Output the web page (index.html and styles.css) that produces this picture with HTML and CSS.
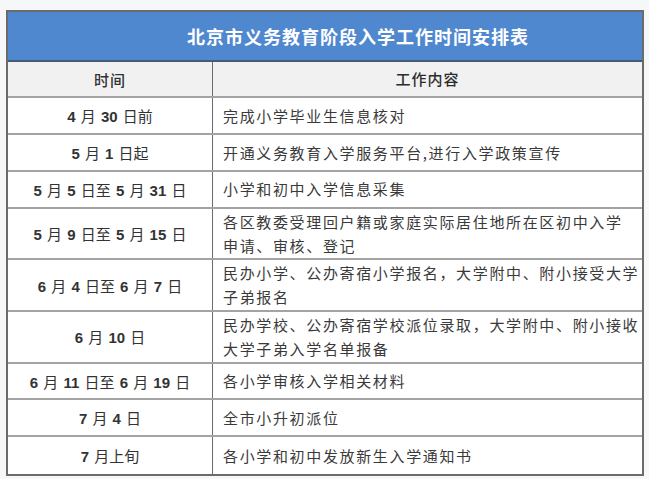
FILE: index.html
```html
<!DOCTYPE html>
<html lang="zh-CN">
<head>
<meta charset="utf-8">
<title>北京市义务教育阶段入学工作时间安排表</title>
<link rel="stylesheet" href="styles.css">
</head>
<body>
<div class="sheet">
  <div class="title">北京市义务教育阶段入学工作时间安排表</div>
  <div class="row head">
    <div class="c1"><span>时间</span></div>
    <div class="c2 center">工作内容</div>
  </div>
  <div class="row single">
    <div class="c1"><span><b>4</b> 月 <b>30</b> 日前</span></div>
    <div class="c2">完成小学毕业生信息核对</div>
  </div>
  <div class="row single">
    <div class="c1"><span><b>5</b> 月 <b>1</b> 日起</span></div>
    <div class="c2">开通义务教育入学服务平台,进行入学政策宣传</div>
  </div>
  <div class="row single">
    <div class="c1"><span><b>5</b> 月 <b>5</b> 日至 <b>5</b> 月 <b>31</b> 日</span></div>
    <div class="c2">小学和初中入学信息采集</div>
  </div>
  <div class="row double">
    <div class="c1"><span><b>5</b> 月 <b>9</b> 日至 <b>5</b> 月 <b>15</b> 日</span></div>
    <div class="c2"><p>各区教委受理回户籍或家庭实际居住地所在区初中入学</p><p>申请、审核、登记</p></div>
  </div>
  <div class="row double">
    <div class="c1"><span><b>6</b> 月 <b>4</b> 日至 <b>6</b> 月 <b>7</b> 日</span></div>
    <div class="c2"><p>民办小学、公办寄宿小学报名，大学附中、附小接受大学</p><p>子弟报名</p></div>
  </div>
  <div class="row double">
    <div class="c1"><span><b>6</b> 月 <b>10</b> 日</span></div>
    <div class="c2"><p>民办学校、公办寄宿学校派位录取，大学附中、附小接收</p><p>大学子弟入学名单报备</p></div>
  </div>
  <div class="row single">
    <div class="c1"><span><b>6</b> 月 <b>11</b> 日至 <b>6</b> 月 <b>19</b> 日</span></div>
    <div class="c2">各小学审核入学相关材料</div>
  </div>
  <div class="row single">
    <div class="c1"><span><b>7</b> 月 <b>4</b> 日</span></div>
    <div class="c2">全市小升初派位</div>
  </div>
  <div class="row single last">
    <div class="c1"><span><b>7</b> 月上旬</span></div>
    <div class="c2">各小学和初中发放新生入学通知书</div>
  </div>
</div>
</body>
</html>
```

FILE: styles.css
```css
html, body {
  margin: 0;
  padding: 0;
}
body {
  background: #f6f7f9;
  width: 649px;
  height: 479px;
  overflow: hidden;
  font-family: "Liberation Sans", "Noto Sans CJK SC", sans-serif;
  color: #333;
}
.sheet {
  box-sizing: border-box;
  margin: 10px 0 0 6px;
  width: 638px;
  height: 466px;
  border: 2px solid #6b6b6b;
  background: #fff;
  display: flex;
  flex-direction: column;
}
.title {
  box-sizing: border-box;
  height: 50px;
  background: #5088d0;
  border-bottom: 2px solid #4a5a70;
  color: #fff;
  font-family: "Noto Sans CJK SC", sans-serif;
  font-weight: bold;
  font-size: 18px;
  letter-spacing: 1px;
  display: flex;
  align-items: center;
  justify-content: center;
  padding-left: 66px;
}
.row {
  box-sizing: border-box;
  display: grid;
  grid-template-columns: 205px 1fr;
  border-bottom: 2px solid #a3a3a3;
}
.row.last {
  border-bottom: none;
}
.head {
  height: 37px;
  background: #f1f1f1;
  font-family: "Noto Sans CJK SC", sans-serif;
  font-size: 15px;
  font-weight: 500;
  letter-spacing: 1px;
  color: #2c2c2c;
}
.single {
  height: 37px;
}
.double {
  height: 52px;
}
.c1 {
  border-right: 1px solid #6b6b6b;
  display: flex;
  align-items: center;
  justify-content: center;
  font-size: 15px;
  color: #333;
}
.c1 span {
  white-space: pre;
  word-spacing: 1px;
}
.c1 b {
  font-weight: bold;
  font-family: "Liberation Sans", sans-serif;
}
.c2 {
  display: flex;
  flex-direction: column;
  justify-content: center;
  padding: 0 0 0 10px;
  font-family: "Noto Sans CJK SC", sans-serif;
  font-size: 15px;
  letter-spacing: 1.65px;
  line-height: 24px;
  color: #3a3a3a;
  white-space: nowrap;
}
.c2 p {
  margin: 0;
}
.c2.center {
  align-items: center;
  padding: 0;
  color: #2c2c2c;
  letter-spacing: 1px;
}
```
